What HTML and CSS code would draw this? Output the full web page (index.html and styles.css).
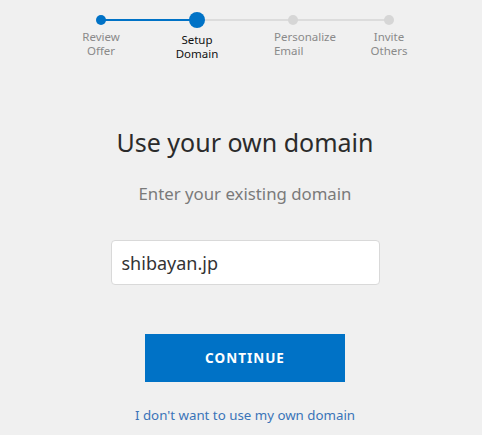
FILE: index.html
```html
<!DOCTYPE html>
<html>
<head>
<meta charset="utf-8">
<link rel="stylesheet" href="styles.css">
</head>
<body>
<div class="page">
  <div class="stepper">
    <div class="step done">
      <div class="dot-row"><span class="dot"></span></div>
      <div class="label">Review<br>Offer</div>
    </div>
    <div class="step active">
      <div class="dot-row"><span class="dot"></span></div>
      <div class="label">Setup<br>Domain</div>
    </div>
    <div class="step todo">
      <div class="dot-row"><span class="dot"></span></div>
      <div class="label left">Personalize<br>Email</div>
    </div>
    <div class="step todo">
      <div class="dot-row"><span class="dot"></span></div>
      <div class="label">Invite<br>Others</div>
    </div>
  </div>

  <h1 class="title">Use your own domain</h1>
  <p class="subtitle">Enter your existing domain</p>
  <div class="field"><input class="domain-input" type="text" value="shibayan.jp"></div>
  <button class="continue">CONTINUE</button>
  <a class="skip" href="#">I don't want to use my own domain</a>
</div>
</body>
</html>
```
FILE: styles.css
```css
html, body {
  margin: 0;
  padding: 0;
  background: #f0f0f0;
}
body {
  font-family: "Noto Sans", "Open Sans", sans-serif;
  color: #333;
  width: 482px;
  height: 435px;
  overflow: hidden;
}
.page {
  padding-left: 8px;
  display: flex;
  flex-direction: column;
  align-items: center;
}
.stepper {
  margin-top: 12px;
  display: grid;
  grid-template-columns: repeat(4, 96px);
}
.step {
  position: relative;
  display: flex;
  flex-direction: column;
  align-items: center;
}
.step + .step::before {
  content: "";
  position: absolute;
  top: 7px;
  height: 2px;
  left: -48px;
  width: 96px;
  background: #dcdcdc;
}
.step.active::before {
  background: #0072c6;
}
.dot-row {
  position: relative;
  z-index: 1;
  height: 16px;
  display: flex;
  align-items: center;
  justify-content: center;
}
.dot {
  width: 10px;
  height: 10px;
  border-radius: 50%;
  background: #d6d6d6;
}
.done .dot {
  background: #0072c6;
}
.active .dot {
  width: 16px;
  height: 16px;
  background: #0072c6;
}
.label {
  margin-top: 2px;
  font-size: 11.5px;
  line-height: 13.5px;
  color: #8a8a8a;
  text-align: center;
}
.active .label {
  margin-top: 5px;
  color: #111;
}
.label.left {
  text-align: left;
  padding-left: 24px;
}
.title {
  margin: 65px 0 0;
  font-weight: 400;
  font-size: 25px;
  line-height: 34px;
  color: #2b2b2b;
}
.subtitle {
  margin: 24px 0 0;
  font-size: 16.8px;
  line-height: 22px;
  color: #7a7a7a;
}
.field {
  margin-top: 35px;
}
.domain-input {
  box-sizing: border-box;
  width: 269px;
  height: 45px;
  border: 1px solid #d9d9d9;
  border-radius: 4px;
  background: #fff;
  padding: 0 10px;
  font-family: "Noto Sans", "Open Sans", sans-serif;
  font-size: 18px;
  color: #333;
  outline: none;
}
.continue {
  margin-top: 49px;
  width: 200px;
  height: 48px;
  border: 0;
  background: #0072c6;
  color: #fff;
  font-family: "Noto Sans", "Open Sans", sans-serif;
  font-weight: 700;
  font-size: 13.5px;
  letter-spacing: 1px;
  padding: 0;
}
.skip {
  margin-top: 24px;
  font-size: 13.3px;
  line-height: 18px;
  color: #3a74b8;
  text-decoration: none;
}
```
